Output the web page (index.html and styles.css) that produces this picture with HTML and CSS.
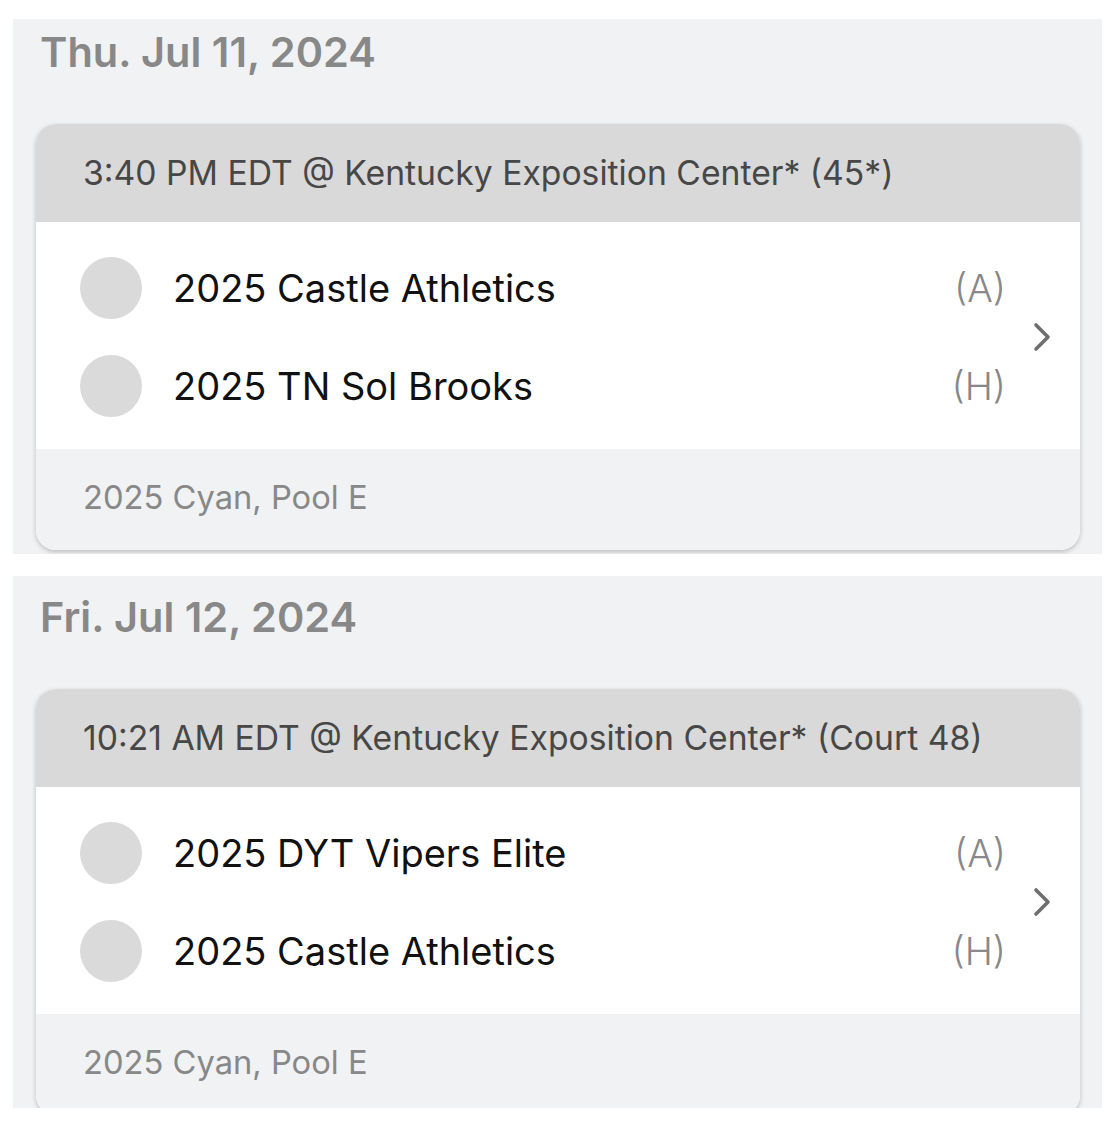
FILE: index.html
```html
<!DOCTYPE html>
<html>
<head>
    <title>Schedule</title>
    <link rel="stylesheet" href="styles.css">
</head>
<body>

<div class="day">
    <h2 class="day-title">Thu. Jul 11, 2024</h2>

    <div class="match">
        <div class="match-head">3:40 PM EDT @ Kentucky Exposition Center* (45*)</div>
        <div class="match-body">
            <div class="teams">
                <div class="team">
                    <span class="logo"></span>
                    <span class="name">2025 Castle Athletics</span>
                    <span class="side">(A)</span>
                </div>
                <div class="team">
                    <span class="logo"></span>
                    <span class="name">2025 TN Sol Brooks</span>
                    <span class="side">(H)</span>
                </div>
            </div>
            <div class="more">
                <svg width="18" height="30" viewBox="0 0 18 30"><polyline points="3,3 15,15 3,27" fill="none" stroke="#6e6e6e" stroke-width="3.6" stroke-linecap="round" stroke-linejoin="round"/></svg>
            </div>
        </div>
        <div class="match-foot">2025 Cyan, Pool E</div>
    </div>
</div>

<div class="day day-second">
    <h2 class="day-title">Fri. Jul 12, 2024</h2>

    <div class="match">
        <div class="match-head">10:21 AM EDT @ Kentucky Exposition Center* (Court 48)</div>
        <div class="match-body">
            <div class="teams">
                <div class="team">
                    <span class="logo"></span>
                    <span class="name">2025 DYT Vipers Elite</span>
                    <span class="side">(A)</span>
                </div>
                <div class="team">
                    <span class="logo"></span>
                    <span class="name">2025 Castle Athletics</span>
                    <span class="side">(H)</span>
                </div>
            </div>
            <div class="more">
                <svg width="18" height="30" viewBox="0 0 18 30"><polyline points="3,3 15,15 3,27" fill="none" stroke="#6e6e6e" stroke-width="3.6" stroke-linecap="round" stroke-linejoin="round"/></svg>
            </div>
        </div>
        <div class="match-foot">2025 Cyan, Pool E</div>
    </div>
</div>

</body>
</html>
```

FILE: styles.css
```css
body {
    margin: 0;
    padding-top: 19px;
    background: white;
    font-family: Inter, "Noto Sans", sans-serif;
}

.day {
    width: 1089px;
    height: 535px;
    margin-left: 13px;
    padding: 8px 22px 0 23px;
    box-sizing: border-box;
    background: #f1f2f4;
    overflow: hidden;
}
.day-second {
    height: 532px;
    margin-top: 22px;
    padding-top: 16px;
}

.day-title {
    margin: 0 0 47px 4px;
    height: 50px;
    line-height: 50px;
    font-size: 41.5px;
    font-weight: 600;
    color: #888;
}

.match {
    background: white;
    border-radius: 20px;
    overflow: hidden;
    box-shadow: 0 2px 5px rgba(0, 0, 0, 0.22);
}

.match-head {
    height: 98px;
    line-height: 98px;
    padding-left: 47px;
    background: #d9d9d9;
    font-size: 33.7px;
    color: #474747;
}

.match-body {
    display: flex;
    align-items: center;
    padding: 17px 0 14px 44px;
}
.teams {
    flex: 1;
}
.team {
    display: flex;
    align-items: center;
    height: 98px;
}
.logo {
    width: 62px;
    height: 62px;
    border-radius: 50%;
    background: #dadada;
}
.name {
    flex: 1;
    margin-left: 31px;
    font-size: 38px;
    color: #111;
}
.side {
    font-size: 38px;
    font-weight: 300;
    color: #888;
    margin-right: -4px;
}
.more {
    width: 76px;
    display: flex;
    justify-content: center;
    padding-left: 2px;
}

.match-foot {
    height: 101px;
    line-height: 96px;
    padding-left: 47px;
    background: #f1f2f4;
    font-size: 32.7px;
    color: #888;
}
```
